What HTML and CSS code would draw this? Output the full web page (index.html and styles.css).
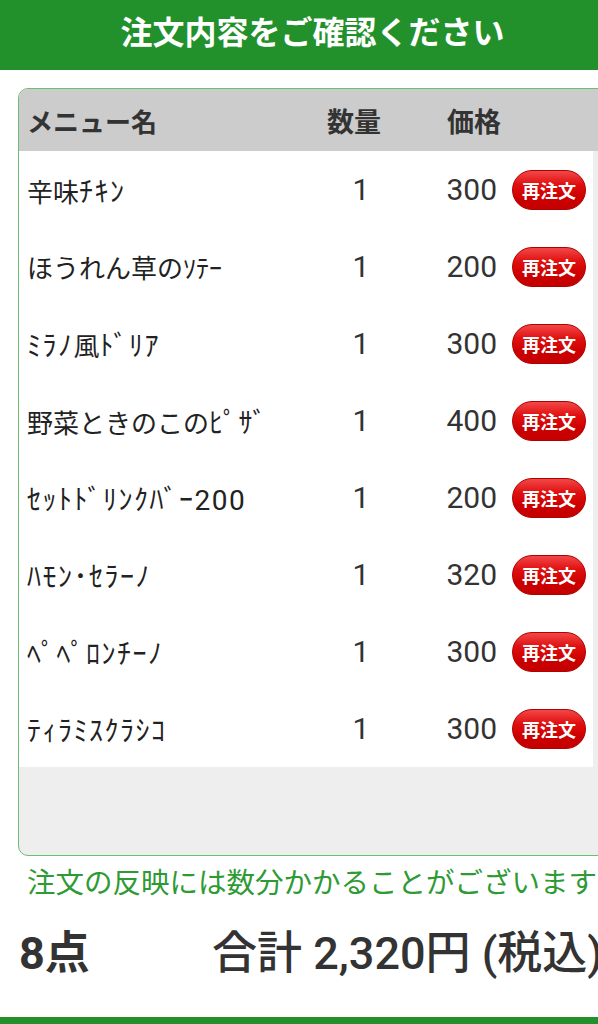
FILE: index.html
```html
<!DOCTYPE html>
<html lang="ja">
<head>
  <meta charset="UTF-8">
  <meta name="viewport" content="width=device-width, initial-scale=1.0">
  <title>注文確認</title>
<link rel="stylesheet" href="styles.css">
</head>
<body>

  <div class="top-bar">注文内容をご確認ください</div>

  <div class="order-box">
    <div class="order-head">
      <span class="col-name">メニュー名</span>
      <span class="col-qty">数量</span>
      <span class="col-price">価格</span>
    </div>

    <div class="order-list">
      <div class="order-row">
        <span class="item-name">辛味<span class="hw">ﾁｷﾝ</span></span>
        <span class="item-qty">1</span>
        <span class="item-price">300</span>
        <button class="reorder">再注文</button>
      </div>
      <div class="order-row">
        <span class="item-name">ほうれん草のｿﾃｰ</span>
        <span class="item-qty">1</span>
        <span class="item-price">200</span>
        <button class="reorder">再注文</button>
      </div>
      <div class="order-row">
        <span class="item-name"><span class="hw">ﾐﾗﾉ</span>風<span class="hw">ﾄﾞﾘｱ</span></span>
        <span class="item-qty">1</span>
        <span class="item-price">300</span>
        <button class="reorder">再注文</button>
      </div>
      <div class="order-row">
        <span class="item-name">野菜ときのこの<span class="hw">ﾋﾟｻﾞ</span></span>
        <span class="item-qty">1</span>
        <span class="item-price">400</span>
        <button class="reorder">再注文</button>
      </div>
      <div class="order-row">
        <span class="item-name"><span class="hw">ｾｯﾄﾄﾞﾘﾝｸﾊﾞｰ200</span></span>
        <span class="item-qty">1</span>
        <span class="item-price">200</span>
        <button class="reorder">再注文</button>
      </div>
      <div class="order-row">
        <span class="item-name"><span class="hw">ﾊﾓﾝ･ｾﾗｰﾉ</span></span>
        <span class="item-qty">1</span>
        <span class="item-price">320</span>
        <button class="reorder">再注文</button>
      </div>
      <div class="order-row">
        <span class="item-name"><span class="hw">ﾍﾟﾍﾟﾛﾝﾁｰﾉ</span></span>
        <span class="item-qty">1</span>
        <span class="item-price">300</span>
        <button class="reorder">再注文</button>
      </div>
      <div class="order-row">
        <span class="item-name"><span class="hw">ﾃｨﾗﾐｽｸﾗｼｺ</span></span>
        <span class="item-qty">1</span>
        <span class="item-price">300</span>
        <button class="reorder">再注文</button>
      </div>
    </div>
  </div>

  <p class="notice">注文の反映には数分かかることがございます</p>

  <div class="total">
    <span class="total-count">8点</span>
    <span class="total-sum">合計 2,320円 (税込)</span>
  </div>

  <div class="bottom-bar"></div>

</body>
</html>
```

FILE: styles.css
```css
html {
  overflow: hidden;
}

body {
  margin: 0;
  padding: 0;
  width: 625px;
  height: 1024px;
  position: relative;
  background-color: #fff;
  font-family: Roboto, "Noto Sans CJK JP", sans-serif;
  color: #333;
}

.top-bar {
  height: 70px;
  box-sizing: border-box;
  padding-top: 17px;
  background-color: #22912c;
  color: #fff;
  font-size: 32px;
  line-height: 32px;
  font-weight: bold;
  text-align: center;
}

.order-box {
  margin: 18px 0 0 18px;
  border: 1px solid #6cbf6c;
  border-radius: 10px;
  background-color: #eeeeee;
  padding-bottom: 88px;
  overflow: hidden;
}

.order-head,
.order-row {
  display: grid;
  grid-template-columns: 1fr 80px 81px 74px;
  column-gap: 15px;
  align-items: center;
  padding: 0 7px 0 8px;
}

.order-head {
  height: 62px;
  padding-right: 38px;
  background-color: #cccccc;
  font-size: 27px;
  font-weight: bold;
  white-space: nowrap;
}

.order-head .col-name {
  font-size: 26px;
}

.order-head .col-qty {
  text-align: center;
  margin-right: 14px;
}

.order-head .col-price {
  grid-column: 3 / 5;
  padding-left: 31px;
}

.order-list {
  background-color: #fff;
  margin-right: 31px;
}

.order-row {
  height: 77px;
}

.item-name {
  font-size: 26px;
  color: #222;
  white-space: nowrap;
}

.item-name .hw {
  font-size: 28px;
  letter-spacing: 1.5px;
}

.item-qty {
  font-size: 30px;
  text-align: center;
}

.item-price {
  font-size: 30px;
  text-align: right;
}

.reorder {
  width: 74px;
  height: 40px;
  padding: 0;
  border: 1px solid #b00000;
  border-radius: 20px;
  background: linear-gradient(#f24848 0%, #e01010 35%, #cc0000 70%, #c40000 100%);
  color: #fff;
  font-family: "Noto Sans CJK JP", sans-serif;
  font-size: 18px;
  font-weight: bold;
  cursor: pointer;
}

.notice {
  margin: 8px 0 0 27px;
  font-size: 28.5px;
  line-height: 40px;
  color: #2e9a34;
  white-space: nowrap;
}

.total {
  display: flex;
  align-items: center;
  height: 70px;
  margin-top: 10px;
  padding-left: 19px;
  font-size: 45px;
  white-space: nowrap;
}

.total-count {
  font-weight: bold;
  width: 193px;
}

.total-sum {
  font-weight: 500;
}

.bottom-bar {
  position: absolute;
  left: 0;
  right: 0;
  bottom: 0;
  height: 7px;
  background-color: #22912c;
}
```
